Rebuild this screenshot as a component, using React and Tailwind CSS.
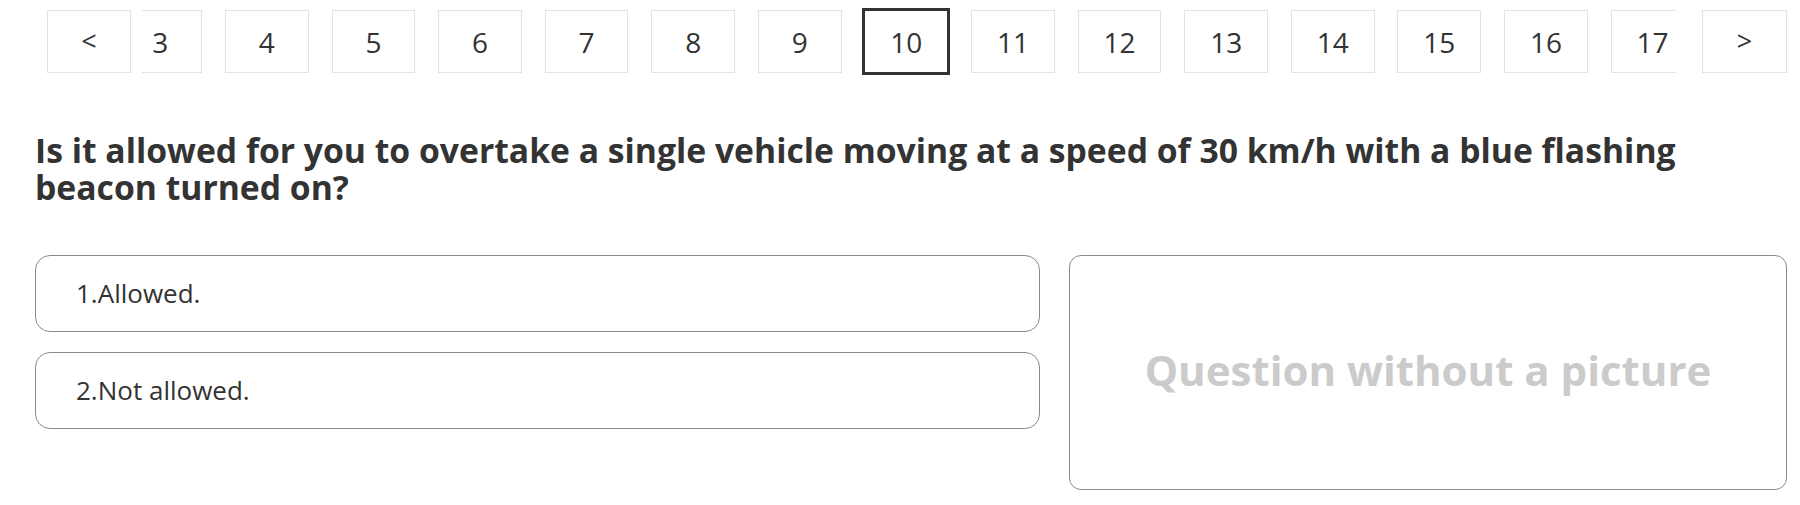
import React from "react"

const pages = [3, 4, 5, 6, 7, 8, 9, 10, 11, 12, 13, 14, 15, 16, 17]
const current = 10

const answers = ["1.Allowed.", "2.Not allowed."]

function PageItem({ n }) {
  if (n === current) {
    return (
      <div className="w-[87.8px] h-[67px] -mx-[2px] shrink-0 border-[3px] border-[#333] flex items-center justify-center text-[28px] text-[#333]">
        {n}
      </div>
    )
  }
  return (
    <div className="w-[83.8px] h-[63px] shrink-0 border border-[#e3e3e3] flex items-center justify-center text-[28px] text-[#333]">
      {n}
    </div>
  )
}

export default function App() {
  return (
    <div className="w-[1800px] h-[505px] bg-white overflow-hidden font-['Open_Sans',sans-serif] text-[#333]">
      {/* pager */}
      <div className="flex items-center pt-[8px] pl-[47px]">
        <button className="w-[84px] h-[63px] shrink-0 border border-[#e3e3e3] flex items-center justify-center text-[27px] text-[#333]">
          &lt;
        </button>
        <div className="ml-[11px] w-[1534px] h-[67px] overflow-hidden shrink-0">
          <div className="flex items-center h-full gap-[22.8px] -ml-[23.7px]">
            {pages.map((n) => (
              <PageItem key={n} n={n} />
            ))}
          </div>
        </div>
        <button className="ml-[26px] w-[85px] h-[63px] shrink-0 border border-[#e3e3e3] flex items-center justify-center text-[27px] text-[#333]">
          &gt;
        </button>
      </div>

      {/* question */}
      <h1 className="mt-[57px] pl-[35px] w-[1760px] text-[33.7px] leading-[37px] font-bold text-[#333]">
        Is it allowed for you to overtake a single vehicle moving at a speed of 30 km/h with a blue flashing beacon turned on?
      </h1>

      <div className="flex gap-[29px] pl-[35px] mt-[49px]">
        <div className="w-[1005px] flex flex-col gap-[20px]">
          {answers.map((a) => (
            <div key={a} className="h-[77px] border border-[#8a8a8a] rounded-[15px] flex items-center pl-[40px] text-[26px] text-[#333]">
              {a}
            </div>
          ))}
        </div>
        <div className="w-[718px] h-[235px] pb-[7px] border border-[#8a8a8a] rounded-[12px] flex items-center justify-center text-[42px] font-bold text-[#cbcbcb]">
          Question without a picture
        </div>
      </div>
    </div>
  )
}
